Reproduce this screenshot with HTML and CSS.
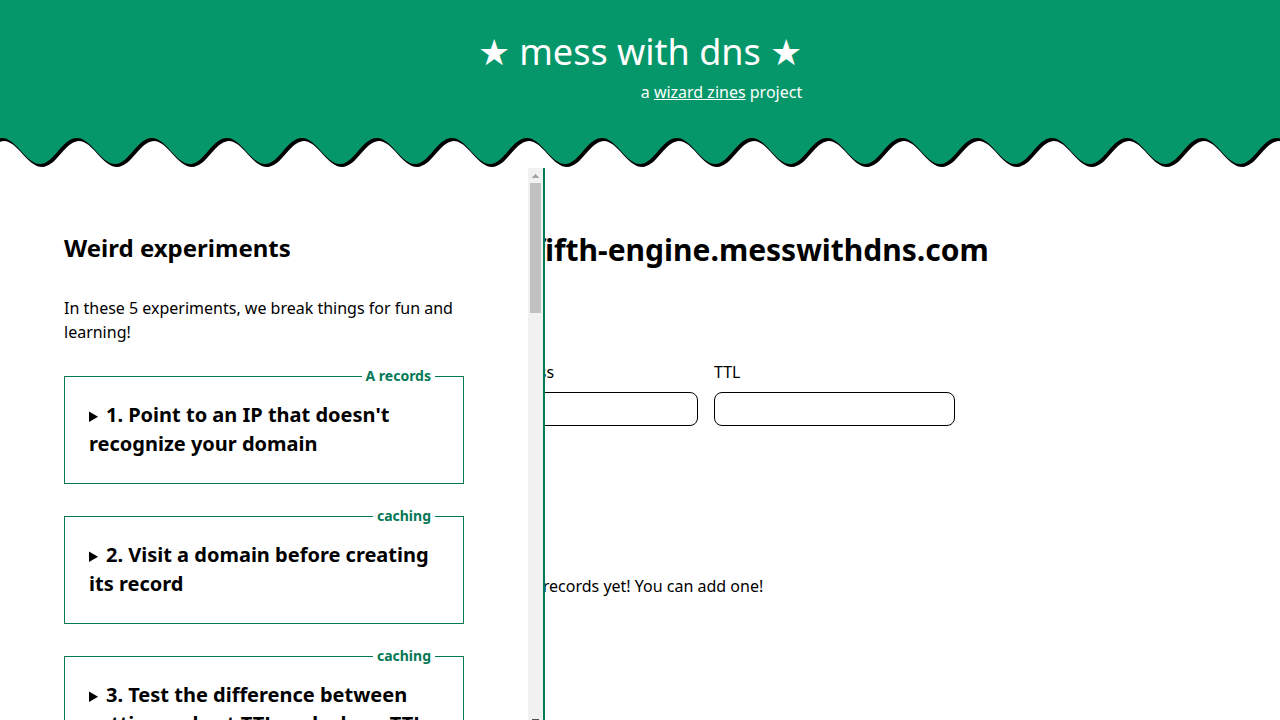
FILE: index.html
```
<!DOCTYPE html>
<html lang="en">
<head>
<meta charset="utf-8">
<title>mess with dns</title>
<meta name="viewport" content="width=device-width, initial-scale=1">
<link rel="stylesheet" href="styles.css">
</head>
<body>
<div class="page">
  <header class="header">
    <div class="brand">
      <div class="brand-title">★ mess with dns ★</div>
      <div class="brand-sub">a <a href="#">wizard zines</a> project</div>
    </div>
  </header>
  <svg class="wave" aria-hidden="true">
    <defs>
      <pattern id="scallop" x="2" y="0" width="75" height="30" patternUnits="userSpaceOnUse">
        <path fill="#000" stroke="#000" stroke-width="2" transform="translate(2 2)" d="M-75 -5V0C-60 0 -51 26 -37 26S-14 0 0 0C14 0 24 26 38 26S60 0 75 0C89 0 99 26 113 26V-5Z"/>
        <path fill="#059669" d="M-75 -5V0C-60 0 -51 26 -37 26S-14 0 0 0C14 0 24 26 38 26S60 0 75 0C89 0 99 26 113 26V-5Z"/>
      </pattern>
    </defs>
    <rect width="100%" height="30" fill="url(#scallop)"/>
  </svg>
  <div class="workspace">
    <main class="main">
      <h1 class="domain">Your domain is: fifth-engine.messwithdns.com</h1>
      <form class="record-form">
        <div class="field"><label for="name">Name</label><input id="name" type="text"></div>
        <div class="field"><label for="address">IPv4 Address</label><input id="address" type="text"></div>
        <div class="field"><label for="ttl">TTL</label><input id="ttl" type="text"></div>
      </form>
      <p class="empty">No records yet! You can add one!</p>
    </main>
    <aside class="sidebar">
      <div class="experiments">
        <h2>Weird experiments</h2>
        <p>In these 5 experiments, we break things for fun and learning!</p>
        <div class="card">
          <span class="tag">A records</span>
          <details><summary><h3>1. Point to an IP that doesn't recognize your domain</h3></summary></details>
        </div>
        <div class="card">
          <span class="tag">caching</span>
          <details><summary><h3>2. Visit a domain before creating its record</h3></summary></details>
        </div>
        <div class="card">
          <span class="tag">caching</span>
          <details><summary><h3>3. Test the difference between setting a short TTL and a long TTL</h3></summary></details>
        </div>
      </div>
      <div class="scrollbar" aria-hidden="true">
        <svg class="arrow" viewBox="0 0 15 15"><path fill="#a3a3a3" d="M7 6h1v1h1v1h1v1h1v1H4V9h1V8h1V7h1z"/></svg>
        <div class="track"><div class="thumb"></div></div>
        <svg class="arrow" viewBox="0 0 15 15"><path fill="#505050" d="M4 5h7v1h-1v1H9v1H8v1H7V8H6V7H5V6H4z"/></svg>
      </div>
    </aside>
  </div>
</div>
</body>
</html>
```
FILE: styles.css
```
* { box-sizing: border-box; margin: 0; }

body {
  font: 16px/24px "Noto Sans", sans-serif;
  color: #000;
  background: #fff;
}

.page {
  display: flex;
  flex-direction: column;
  height: 100vh;
  overflow: hidden;
}

.header {
  display: flex;
  justify-content: center;
  padding: 24px 0 34px;
  background: #059669;
  color: #fff;
}

.brand-title { font-size: 36px; line-height: 56px; }
.brand-sub { text-align: right; }
.brand-sub a { color: inherit; }

.wave {
  display: block;
  flex: none;
  width: 100%;
  height: 30px;
}

.workspace {
  position: relative;
  flex: 1;
}

.main {
  width: 100%;
  max-width: 880px;
  margin: 0 auto;
  padding-top: 62px;
}

.domain {
  padding-left: 4px;
  font-size: 30px;
  line-height: 40px;
  text-align: center;
  white-space: nowrap;
}

.record-form {
  display: grid;
  grid-template-columns: repeat(3, 1fr);
  gap: 16px;
  max-width: 755px;
  margin-top: 90px;
}

.field {
  display: flex;
  flex-direction: column;
  gap: 8px;
}

.field input {
  width: 100%;
  height: 34px;
  padding: 4px 8px;
  border: 1px solid #000;
  border-radius: 8px;
  background: #fff;
  font: inherit;
}

.empty {
  margin-top: 148px;
  text-align: center;
}

/* Panel that slides over the main column */
.sidebar {
  position: absolute;
  top: 0;
  left: 0;
  display: flex;
  width: 545px;
  height: calc(100vh - 159px);
  border-right: 2px solid #047857;
  background: #fff;
}

.experiments {
  flex: 1;
  display: flex;
  flex-direction: column;
  gap: 32px;
  padding: 64px;
  overflow-y: auto;
  scrollbar-width: none;
}

.experiments h2 { font-size: 24px; line-height: 32px; }

.card {
  position: relative;
  flex: none;
  padding: 23px 24px 25px;
  border: 1px solid #047857;
}

.card h3 {
  display: inline;
  font-size: 20px;
  line-height: 29px;
}

.tag {
  position: absolute;
  top: -11px;
  right: 28px;
  padding: 0 4px;
  background: #fff;
  color: #047857;
  font-size: 14px;
  font-weight: 700;
  line-height: 20px;
}

.scrollbar {
  display: flex;
  flex-direction: column;
  width: 15px;
  background: #f1f1f1;
}

.arrow { display: block; width: 15px; height: 15px; }
.track { flex: 1; padding: 0 2px; }
.thumb { height: 130px; background: #c1c1c1; }
```
